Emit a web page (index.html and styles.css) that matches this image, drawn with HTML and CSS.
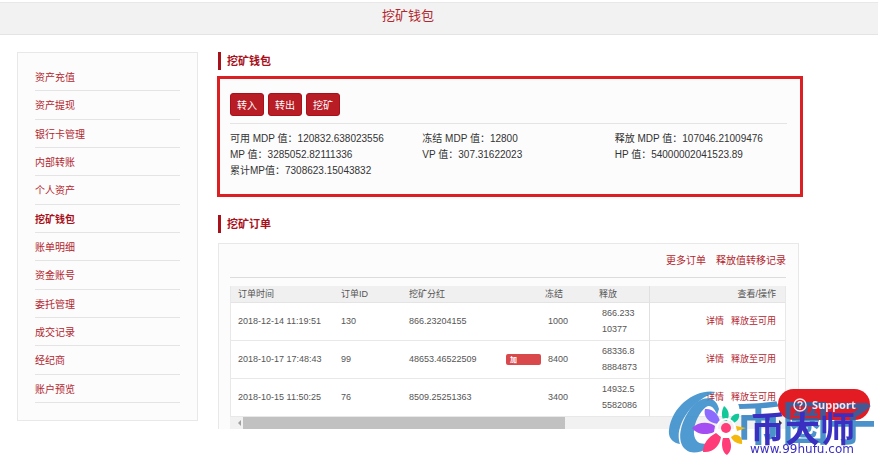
FILE: index.html
```html
<!DOCTYPE html>
<html lang="zh-CN">
<head>
    <meta charset="UTF-8">
    <meta name="viewport" content="width=device-width, initial-scale=1.0">
    <title>挖矿钱包</title>
    <link rel="stylesheet" href="styles.css">
</head>
<body>
    <header class="header">
        <h1>挖矿钱包</h1>
    </header>
    <div class="container">
        <nav class="sidebar">
            <ul>
                <li><a href="#">资产充值</a></li>
                <li><a href="#">资产提现</a></li>
                <li><a href="#">银行卡管理</a></li>
                <li><a href="#">内部转账</a></li>
                <li><a href="#">个人资产</a></li>
                <li><a href="#" class="active">挖矿钱包</a></li>
                <li><a href="#">账单明细</a></li>
                <li><a href="#">资金账号</a></li>
                <li><a href="#">委托管理</a></li>
                <li><a href="#">成交记录</a></li>
                <li><a href="#">经纪商</a></li>
                <li><a href="#">账户预览</a></li>
            </ul>
        </nav>
        <main class="main">
            <h2>挖矿钱包</h2>
            <section class="wallet">
                <div class="button-group">
                    <button type="button">转入</button>
                    <button type="button">转出</button>
                    <button type="button">挖矿</button>
                </div>
                <div class="values">
                    <div>可用 MDP 值：120832.638023556</div>
                    <div>冻结 MDP 值：12800</div>
                    <div>释放 MDP 值：107046.21009476</div>
                    <div>MP 值：3285052.82111336</div>
                    <div>VP 值：307.31622023</div>
                    <div>HP 值：54000002041523.89</div>
                    <div>累计MP值：7308623.15043832</div>
                </div>
            </section>
            <h2>挖矿订单</h2>
            <section class="orders">
                <div class="order-links">
                    <a href="#">更多订单</a>
                    <a href="#">释放值转移记录</a>
                </div>
                <table>
                    <colgroup>
                        <col class="col-time">
                        <col class="col-id">
                        <col class="col-bonus">
                        <col class="col-frozen">
                        <col class="col-released">
                        <col>
                    </colgroup>
                    <thead>
                        <tr>
                            <th>订单时间</th>
                            <th>订单ID</th>
                            <th>挖矿分红</th>
                            <th class="frozen">冻结</th>
                            <th>释放</th>
                            <th class="action">查看/操作</th>
                        </tr>
                    </thead>
                    <tbody>
                        <tr>
                            <td>2018-12-14 11:19:51</td>
                            <td>130</td>
                            <td>866.23204155</td>
                            <td>1000</td>
                            <td class="released">866.23310377</td>
                            <td class="action"><a href="#">详情</a><a href="#">释放至可用</a></td>
                        </tr>
                        <tr>
                            <td>2018-10-17 17:48:43</td>
                            <td>99</td>
                            <td class="bonus"><div class="bonus-row">48653.46522509<span class="tag">加</span></div></td>
                            <td>8400</td>
                            <td class="released">68336.88884873</td>
                            <td class="action"><a href="#">详情</a><a href="#">释放至可用</a></td>
                        </tr>
                        <tr>
                            <td>2018-10-15 11:50:25</td>
                            <td>76</td>
                            <td>8509.25251363</td>
                            <td>3400</td>
                            <td class="released">14932.55582086</td>
                            <td class="action"><a href="#">详情</a><a href="#">释放至可用</a></td>
                        </tr>
                    </tbody>
                </table>
                <div class="scrollbar">
                    <span class="arrow-left"></span>
                    <span class="thumb"></span>
                    <span class="arrow-right"></span>
                </div>
            </section>
        </main>
    </div>

    <div class="corner">
        <button type="button" class="support">
            <span class="support-label">
                <svg width="14" height="14" viewBox="0 0 14 14" fill="none" stroke="currentColor" stroke-width="1.4">
                    <circle cx="7" cy="7" r="6"/>
                    <path d="M5 5.6C5 3.2 9 3.2 9 5.6C9 7 7 6.8 7 8.4M7 9.4V10.8"/>
                </svg>
                Support
            </span>
        </button>
        <svg class="logo" width="60" height="68" viewBox="0 0 60 68" fill="#3b8fcc">
            <path d="M49 4C31 0 5 16 2 42C1 50 6 55 13 56C7 40 22 13 49 4Z"/>
            <path d="M52 21C48 4 30 8 20 26C10 44 11 60 23 64C33 66 45 60 50 52C43 56 33 58 29 52C23 43 31 25 39 19C44 16 48 21 50 27Z"/>
        </svg>
        <span class="mark-back">币圈子</span>
        <svg class="flower" width="56" height="50" viewBox="0 0 56 50">
            <path fill="#8c6bff" d="M26 18C16 17 11 10 13 3C20 2 27 8 28 16Z"/>
            <path fill="#12c79a" d="M31 14C29 8 30 4 32 0C37 4 38 9 35 15Z"/>
            <path fill="#12c79a" d="M38 15C39 10 43 7 47 8C48 12 45 16 41 17Z"/>
            <path fill="#a44df2" d="M22 26C14 30 4 28 0 22C6 16 16 15 23 20Z"/>
            <path fill="#f5b80c" d="M44 20L54 22L45 25ZM42 29C47 28 51 32 50 38C44 38 40 34 39 31Z"/>
            <path fill="#ff3c78" d="M24 27L29 31C28 39 22 47 11 46C11 38 16 31 24 27ZM31 32L37 32C40 38 40 45 35 49C30 46 29 38 31 32Z"/>
            <circle cx="34" cy="22" r="9" fill="none" stroke="#fff" stroke-width="2"/>
            <circle cx="34" cy="22" r="5" fill="#ff3c78"/>
        </svg>
        <span class="mark-front">币大师</span>
        <span class="mark-url">www.99hufu.com</span>
    </div>
</body>
</html>
```
FILE: styles.css
```css
* {
    box-sizing: border-box;
}
body {
    font-family: "Liberation Sans", "Noto Sans CJK SC", sans-serif;
    font-size: 10px;
    margin: 0;
    padding-top: 2px;
    background-color: #fff;
    color: #333;
    overflow: hidden;
}
a {
    color: #b3252e;
    text-decoration: none;
}
.header {
    padding: 0 79px 0 17px;
    background: #f2f2f2;
    border-top: 1px solid #e8e8e8;
    border-bottom: 1px solid #e4e4e4;
}
.header h1 {
    margin: 0;
    padding-bottom: 5px;
    text-align: center;
    font-size: 13px;
    font-weight: normal;
    line-height: 26px;
    color: #b3252e;
}
.container {
    display: flex;
    align-items: flex-start;
    gap: 20px;
    padding: 17px 79px 0 17px;
}
.sidebar {
    flex: 0 0 181px;
    padding: 10px 17px 17px;
    border: 1px solid #e8e8e8;
    background: #fcfcfc;
}
.sidebar ul {
    display: flex;
    flex-direction: column;
    min-height: 340px;
    margin: 0;
    padding: 0;
    list-style: none;
}
.sidebar li {
    flex: 1;
    border-bottom: 1px solid #e4e4e4;
}
.sidebar a {
    display: block;
    line-height: 30px;
    height: 20px;
}
.sidebar .active {
    font-weight: bold;
    color: #a8101a;
}
.main {
    flex: 1;
    min-width: 0;
}
.main h2 {
    margin: 0;
    padding-left: 6px;
    border-left: 3px solid #a8101a;
    font-size: 11px;
    line-height: 18px;
    color: #a8101a;
}
.wallet {
    margin: 6px -4px 18px -1px;
    padding: 14px 13px 15px 10px;
    border: 3px solid #dc1f22;
    background: #fcfcfc;
}
.button-group {
    display: flex;
    gap: 4px;
    padding-bottom: 7px;
    border-bottom: 1px solid #e4e4e4;
}
.button-group button {
    width: 34px;
    height: 23px;
    padding: 0;
    border: 1px solid #a8101a;
    border-radius: 3px;
    background-color: #b81c25;
    color: #fff;
    font-family: inherit;
    font-size: 10px;
    cursor: pointer;
}
.values {
    display: grid;
    grid-template-columns: repeat(3, 1fr);
    margin-right: -20px;
    padding-top: 7px;
    line-height: 16px;
}
.orders {
    margin-top: 10px;
    padding: 9px 12px 0 11px;
    border: 1px solid #e8e8e8;
    border-bottom: none;
    background: #fcfcfc;
}
.order-links {
    display: flex;
    justify-content: flex-end;
    gap: 10px;
    margin-bottom: 8px;
    padding-bottom: 8px;
    border-bottom: 1px solid #dcdcdc;
    line-height: 16px;
}
table {
    width: 100%;
    table-layout: fixed;
    border-collapse: separate;
    border-spacing: 0;
    border-left: 1px solid #e8e8e8;
    border-right: 1px solid #e8e8e8;
    background: #fff;
    font-size: 9px;
    line-height: 16px;
    color: #555;
}
.col-time {
    width: 103px;
}
.col-id {
    width: 68px;
}
.col-bonus {
    width: 139px;
}
.col-frozen {
    width: 51px;
}
.col-released {
    width: 57px;
}
th {
    padding: 0 7px;
    border-bottom: 1px solid #e4e4e4;
    background: #f0f0f0;
    font-weight: normal;
    text-align: left;
}
td {
    height: 38px;
    padding: 2px 7px 3px;
    border-bottom: 1px solid #e8e8e8;
}
th.frozen {
    padding-left: 4px;
}
td.bonus {
    padding-right: 0;
}
.bonus-row {
    display: flex;
    align-items: center;
    justify-content: space-between;
}
.tag {
    width: 35px;
    padding-left: 4px;
    border-radius: 2px;
    background: #d9484b;
    color: #fff;
    font-size: 7px;
    font-weight: bold;
    line-height: 11px;
}
td.released {
    padding-left: 10px;
    padding-right: 11px;
    word-break: break-all;
}
.action {
    border-left: 1px solid #e0e0e0;
    padding-right: 9px;
    text-align: right;
}
.action a + a {
    margin-left: 7px;
}
.scrollbar {
    display: flex;
    align-items: center;
    height: 12px;
    background: #f1f1f1;
}
.arrow-left {
    width: 13px;
}
.arrow-left::before {
    content: "";
    display: block;
    width: 3px;
    margin-left: 5px;
    border: 3px solid transparent;
    border-left: none;
    border-right-color: #a0a0a0;
}
.thumb {
    width: 58%;
    height: 12px;
    background: #c1c1c1;
}
.arrow-right {
    margin-left: auto;
    margin-right: 4px;
    border: 3px solid transparent;
    border-right: none;
    border-left-color: #333;
}
/* support button and watermark lie over the corner of the page */
.corner {
    position: fixed;
    right: 0;
    bottom: 0;
    width: 214px;
    height: 68px;
}
.corner > * {
    position: absolute;
    white-space: nowrap;
}
.support {
    right: 8px;
    top: 1px;
    width: 92px;
    height: 31px;
    padding: 0;
    border: none;
    background: none;
    color: #f6e4ee;
    font-family: "Noto Sans", sans-serif;
    font-size: 11px;
    font-weight: bold;
    cursor: pointer;
}
.support::before {
    content: "";
    position: absolute;
    inset: 0;
    border-radius: 16px;
    background-color: #e31b23;
}
/* the label stays readable above the tinted letters */
.support-label {
    position: relative;
    z-index: 2;
    display: flex;
    align-items: center;
    gap: 5px;
    padding-left: 15px;
}
.logo {
    left: 3px;
    top: 0;
    opacity: .9;
}
.flower {
    left: 28px;
    top: 18px;
}
.mark-back,
.mark-front,
.mark-url {
    z-index: 1;
    pointer-events: none;
}
.mark-back {
    right: 2px;
    top: 12px;
    font-size: 47px;
    font-weight: bold;
    line-height: 47px;
    color: rgba(15, 110, 185, .75);
}
.flower {
    z-index: 1;
}
.mark-front {
    left: 86px;
    top: 24px;
    font-size: 35px;
    font-weight: bold;
    line-height: 35px;
    color: #3a2fc0;
}
.mark-url {
    left: 86px;
    bottom: 0;
    font-family: "DejaVu Sans", sans-serif;
    font-size: 12px;
    line-height: 14px;
    color: #3a2fc0;
}
```
